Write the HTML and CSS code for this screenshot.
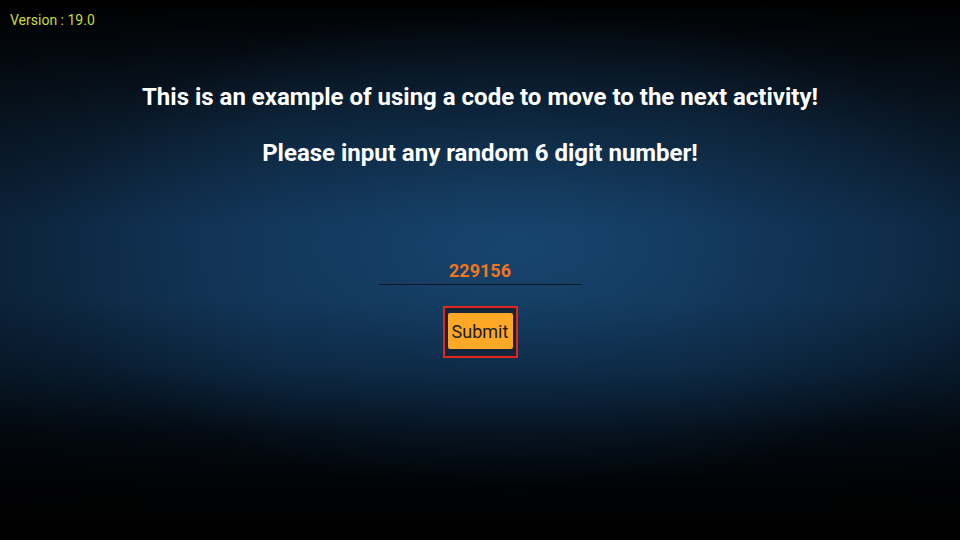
FILE: index.html
```html
<!DOCTYPE html>
<html>
<head>
<meta charset="utf-8">
<link rel="stylesheet" href="styles.css">
</head>
<body>
<div class="screen">
  <div class="version">Version : 19.0</div>
  <div class="content">
    <h1 class="title">This is an example of using a code to move to the next activity!</h1>
    <h2 class="subtitle">Please input any random 6 digit number!</h2>
    <div class="code-field">229156</div>
    <div class="focus-ring">
      <button class="submit">Submit</button>
    </div>
  </div>
</div>
</body>
</html>
```
FILE: styles.css
```css
html, body {
  margin: 0;
  padding: 0;
  background: #000;
}
.screen {
  width: 960px;
  height: 540px;
  overflow: hidden;
  font-family: Roboto, "Liberation Sans", sans-serif;
  display: flex;
  flex-direction: column;
  background:
    radial-gradient(ellipse 50% 45% at 54% 46%, rgba(28,84,128,0.5) 0%, rgba(20,62,100,0.3) 50%, rgba(0,0,0,0) 100%),
    linear-gradient(to right, rgba(0,0,0,0.35) 0%, rgba(0,0,0,0) 30%, rgba(0,0,0,0) 70%, rgba(0,0,0,0.3) 100%),
    linear-gradient(to bottom, #000000 0%, #050c14 10%, #0c2136 25%, #12355a 42%, #123558 55%, #0b243d 68%, #040c15 80%, #010305 90%, #000000 100%);
}
.version {
  color: #cddc39;
  font-size: 14px;
  padding: 12px 0 0 10px;
  line-height: 16px;
}
.content {
  display: flex;
  flex-direction: column;
  align-items: center;
}
.title {
  margin: 55px 0 0;
  color: #ffffff;
  font-size: 24px;
  font-weight: 700;
  line-height: 28px;
}
.subtitle {
  margin: 28px 0 0;
  color: #ffffff;
  font-size: 24px;
  font-weight: 700;
  line-height: 28px;
}
.code-field {
  margin-top: 94px;
  width: 203px;
  text-align: center;
  color: #f0761e;
  font-size: 18px;
  font-weight: 700;
  line-height: 20px;
  padding-bottom: 3px;
  border-bottom: 1px solid #0a1622;
}
.focus-ring {
  margin-top: 21px;
  border: 2px solid #e1261c;
  padding: 5px 3px 7px;
  background: #16263a;
}
.submit {
  display: block;
  width: 65px;
  height: 36px;
  border: none;
  border-radius: 2px;
  background: #ffa726;
  color: #1c1c1c;
  font-family: Roboto, "Liberation Sans", sans-serif;
  font-size: 18px;
  padding: 0;
}
```
